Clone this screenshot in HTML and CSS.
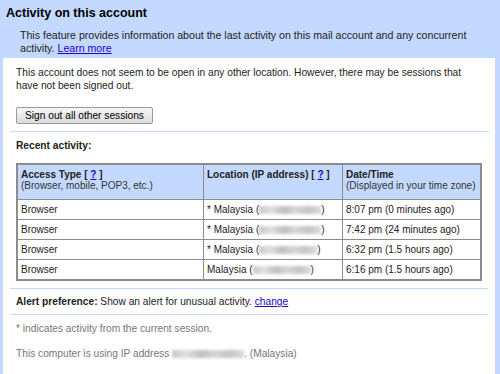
FILE: index.html
```html
<!DOCTYPE html>
<html>

	<head>
		<meta charset="UTF-8">
		<title>Activity on this account</title>
		<link rel="stylesheet" href="styles.css">
	</head>

	<body>
		<div class="head">
			<h1 class="title">Activity on this account</h1>
			<p class="intro">This feature provides information about the last activity on this mail account and any concurrent activity. <a href="#">Learn more</a></p>
		</div>

		<div class="panel">
			<div class="sessions">
				<p>This account does not seem to be open in any other location. However, there may be sessions that have not been signed out.</p>
				<button class="btn">Sign out all other sessions</button>
			</div>

			<div class="recent">
				<h2 class="label">Recent activity:</h2>
				<table class="activity">
					<tr>
						<th class="c1"><b>Access Type [ <a href="#">?</a> ]</b><br><span>(Browser, mobile, POP3, etc.)</span></th>
						<th class="c2"><b>Location (IP address) [ <a href="#">?</a> ]</b><br>&nbsp;</th>
						<th class="c3"><b>Date/Time</b><br><span>(Displayed in your time zone)</span></th>
					</tr>
					<tr>
						<td>Browser</td>
						<td>* Malaysia (<i class="ip"></i>)</td>
						<td>8:07 pm (0 minutes ago)</td>
					</tr>
					<tr>
						<td>Browser</td>
						<td>* Malaysia (<i class="ip"></i>)</td>
						<td>7:42 pm (24 minutes ago)</td>
					</tr>
					<tr>
						<td>Browser</td>
						<td>* Malaysia (<i class="ip short"></i>)</td>
						<td>6:32 pm (1.5 hours ago)</td>
					</tr>
					<tr>
						<td>Browser</td>
						<td>Malaysia (<i class="ip short"></i>)</td>
						<td>6:16 pm (1.5 hours ago)</td>
					</tr>
				</table>
			</div>

			<div class="alert">
				<b>Alert preference:</b> Show an alert for unusual activity. <a href="#">change</a>
			</div>

			<div class="notes">
				<p>* indicates activity from the current session.</p>
				<p>This computer is using IP address <i class="ip gray"></i>. (Malaysia)</p>
			</div>
		</div>
	</body>

</html>
```

FILE: styles.css
```css
* {
	margin: 0;
	padding: 0;
}

html,
body {
	width: 100%;
	height: 100%;
}

body {
	background: #c3d9ff;
	font-family: "Liberation Sans", Arial, sans-serif;
	font-size: 10.2px;
	color: #222;
	overflow: hidden;
}

a {
	color: #2200cc;
}

.head {
	padding: 5px 6px 3px;
}

.title {
	font-size: 12.5px;
	line-height: 16px;
	font-weight: bold;
	color: #000;
}

.intro {
	margin: 8px 0 0 14px;
	font-size: 10.6px;
	line-height: 13px;
	color: #222;
}

.panel {
	margin: 0 5px 0 3px;
	background: #fff;
	height: 400px;
}

.sessions {
	margin: 0 6px 0 7px;
	padding: 8px 6px 7px;
	border-bottom: 1px solid #c3d9ff;
}

.sessions p {
	line-height: 13px;
}

.btn {
	margin-top: 15px;
	height: 17px;
	padding: 0 8px;
	font-family: "Liberation Sans", Arial, sans-serif;
	font-size: 10.2px;
	color: #000;
	border: 1px solid #999;
	border-radius: 2px;
	background: linear-gradient(#f6f6f6, #dcdcdc);
}

.recent {
	margin: 0 7px;
	padding: 8px 6px 7px;
	border-bottom: 1px solid #c3d9ff;
}

.label {
	font-size: 10.2px;
	font-weight: bold;
	line-height: 12px;
	margin-bottom: 11px;
}

.activity {
	width: 466px;
	border-collapse: collapse;
	border: 2px solid #8c8c8c;
	font-size: 10px;
}

.activity th,
.activity td {
	border: 1px solid #8c8c8c;
	text-align: left;
	padding: 0 2px 0 3px;
	line-height: 11px;
	height: 19px;
	font-weight: normal;
	vertical-align: middle;
	white-space: nowrap;
}

.activity th {
	background: #c3d9ff;
	height: 30px;
	vertical-align: top;
	padding-top: 4px;
}

.activity th span {
	color: #333;
}

.c1 {
	width: 180px;
}

.c2 {
	width: 133px;
}

.ip {
	display: inline-block;
	width: 62px;
	height: 8px;
	vertical-align: -1px;
	background: linear-gradient(90deg, #c8c8c8 0, #e0e0e0 20%, #bfbfbf 40%, #d6d6d6 60%, #c4c4c4 80%, #dcdcdc 100%);
	filter: blur(1.5px);
}

.ip.short {
	width: 58px;
}

.ip.gray {
	width: 72px;
}

.alert {
	margin: 0 7px;
	padding: 7px 6px 6px;
	line-height: 12px;
	border-bottom: 1px solid #c3d9ff;
}

.notes {
	padding: 8px 13px;
	color: #777;
}

.notes p {
	line-height: 12px;
	margin-bottom: 13px;
}
```
